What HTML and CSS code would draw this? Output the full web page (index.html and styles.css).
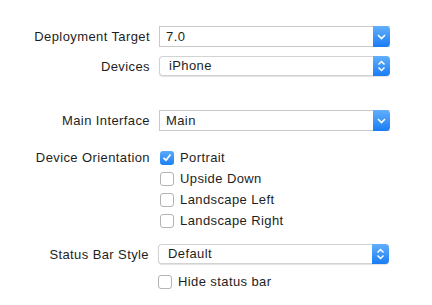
FILE: index.html
```html
<!DOCTYPE html>
<html>
<head>
    <meta charset="UTF-8">
    <title>Deployment Info</title>
    <link rel="stylesheet" href="styles.css">
</head>
<body>
  <div class="form">
    <div class="row first">
      <div class="label">Deployment Target</div>
      <div class="combo">
        <span class="value">7.0</span>
        <span class="arrow">
          <svg width="9" height="6" viewBox="0 0 9 6"><path d="M1 1 L4.5 4.5 L8 1" fill="none" stroke="#fff" stroke-width="1.6"/></svg>
        </span>
      </div>
    </div>
    <div class="row devices">
      <div class="label">Devices</div>
      <div class="combo popup">
        <span class="value">iPhone</span>
        <span class="arrow">
          <svg width="9" height="12" viewBox="0 0 9 12"><path d="M1.5 4.5 L4.5 1.5 L7.5 4.5 M1.5 7.5 L4.5 10.5 L7.5 7.5" fill="none" stroke="#fff" stroke-width="1.5"/></svg>
        </span>
      </div>
    </div>
    <div class="row main">
      <div class="label">Main Interface</div>
      <div class="combo">
        <span class="value">Main</span>
        <span class="arrow">
          <svg width="9" height="6" viewBox="0 0 9 6"><path d="M1 1 L4.5 4.5 L8 1" fill="none" stroke="#fff" stroke-width="1.6"/></svg>
        </span>
      </div>
    </div>
    <div class="row orientation">
      <div class="label">Device Orientation</div>
      <div class="checks">
        <div class="check on"><span class="box"><svg width="10" height="9" viewBox="0 0 10 9"><path d="M1.5 4.8 L4 7.2 L8.5 1.5" fill="none" stroke="#fff" stroke-width="1.8"/></svg></span>Portrait</div>
        <div class="check"><span class="box"></span>Upside Down</div>
        <div class="check"><span class="box"></span>Landscape Left</div>
        <div class="check"><span class="box"></span>Landscape Right</div>
      </div>
    </div>
    <div class="row status">
      <div class="label">Status Bar Style</div>
      <div class="combo popup">
        <span class="value">Default</span>
        <span class="arrow">
          <svg width="9" height="12" viewBox="0 0 9 12"><path d="M1.5 4.5 L4.5 1.5 L7.5 4.5 M1.5 7.5 L4.5 10.5 L7.5 7.5" fill="none" stroke="#fff" stroke-width="1.5"/></svg>
        </span>
      </div>
    </div>
    <div class="row hide">
      <div class="label"></div>
      <div class="check"><span class="box"></span>Hide status bar</div>
    </div>
  </div>
</body>
</html>
```

FILE: styles.css
```css
body {
    margin: 0;
    background: #fff;
    font-family: "Helvetica Neue", "Liberation Sans", Arial, sans-serif;
    font-size: 13px;
    letter-spacing: 0.4px;
    color: #1e1e1e;
}
.form {
    padding-top: 26px;
    width: 390px;
}
.row {
    display: flex;
    align-items: center;
}
.label {
    width: 150px;
    flex: none;
    text-align: right;
    margin-right: 9px;
    white-space: nowrap;
}
.devices {
    margin-top: 9px;
}
.main {
    margin-top: 34px;
}
.orientation {
    margin-top: 16px;
    align-items: flex-start;
}
.orientation .label {
    line-height: 21px;
}
.status {
    margin-top: 13px;
    margin-left: -1px;
}
.hide {
    margin-top: 7px;
    margin-left: -2px;
}
.combo {
    width: 231px;
    height: 21px;
    box-sizing: border-box;
    border: 1px solid #c9c9c9;
    border-right: none;
    display: flex;
    align-items: stretch;
    background: #fff;
}
.combo .value {
    flex: 1;
    padding-left: 6px;
    line-height: 19px;
}
.combo .arrow {
    width: 17px;
    margin: -1px 0;
    background: linear-gradient(#62b0fb, #1a7cf4);
    border-radius: 0 4px 4px 0;
    display: flex;
    align-items: center;
    justify-content: center;
}
.popup {
    height: 20px;
    border-radius: 4px;
    border-color: #d3d3d3;
    box-shadow: 0 1px 1px rgba(0, 0, 0, 0.12);
}
.popup .value {
    padding-left: 9px;
    line-height: 18px;
}
.checks {
    display: flex;
    flex-direction: column;
}
.check {
    height: 21px;
    display: flex;
    align-items: center;
}
.box {
    width: 14px;
    height: 14px;
    box-sizing: border-box;
    border: 1px solid #b4b4b4;
    border-radius: 3px;
    background: #fff;
    margin-left: 1px;
    margin-right: 6px;
    display: flex;
    align-items: center;
    justify-content: center;
}
.check.on .box {
    border: none;
    background: linear-gradient(#5aaafa, #1c7ff4);
}
```
